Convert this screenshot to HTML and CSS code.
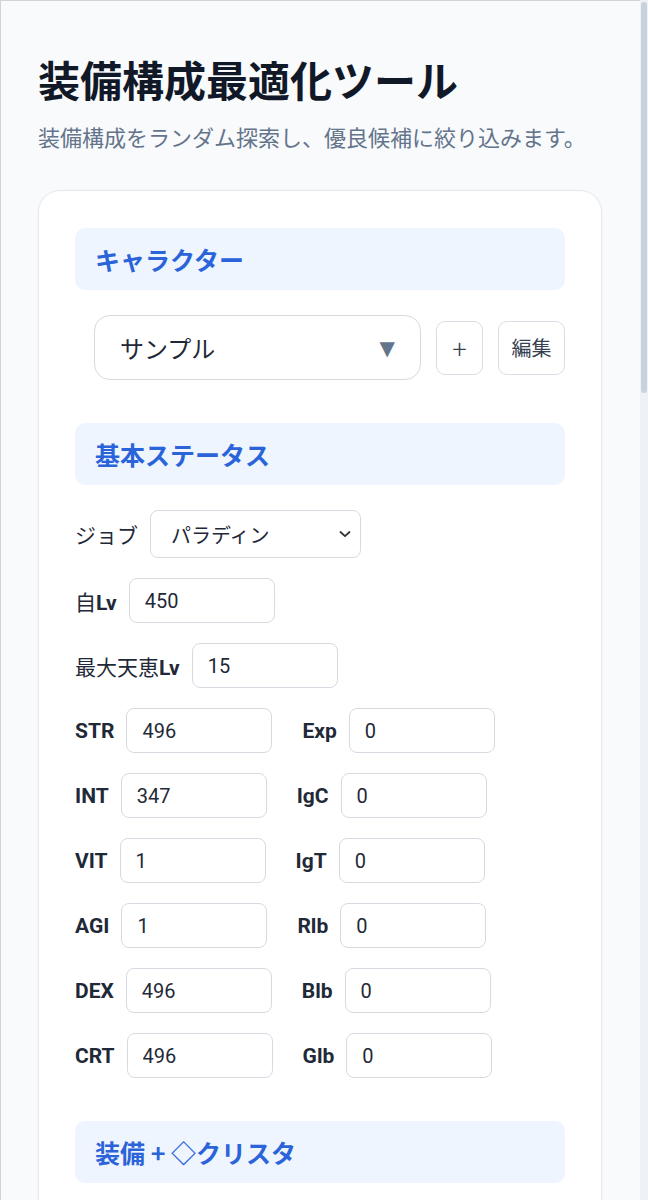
FILE: index.html
```html
<!DOCTYPE html>
<html lang="ja">
<head>
<meta charset="utf-8">
<title>装備構成最適化ツール</title>
<link rel="stylesheet" href="styles.css">
</head>
<body>
<div class="page">
  <h1 class="title">装備構成最適化ツール</h1>
  <p class="subtitle">装備構成をランダム探索し、優良候補に絞り込みます。</p>

  <section class="card">
    <h2 class="sec-head">キャラクター</h2>
    <div class="char-row">
      <div class="char-select">
        <span>サンプル</span>
        <span class="tri">▼</span>
      </div>
      <button class="btn btn-add" type="button">+</button>
      <button class="btn btn-edit" type="button">編集</button>
    </div>

    <h2 class="sec-head sec-gap">基本ステータス</h2>
    <div class="form">
      <div class="row">
        <div class="field">
          <span class="lbl">ジョブ</span>
          <div class="job-select">
            <span>パラディン</span>
            <svg class="chev" width="14" height="10" viewBox="0 0 14 10"><path d="M2.5 3 L7 7.2 L11.5 3" fill="none" stroke="#333" stroke-width="1.8" stroke-linecap="round" stroke-linejoin="round"/></svg>
          </div>
        </div>
      </div>
      <div class="row">
        <div class="field">
          <span class="lbl">自<b class="lat">Lv</b></span>
          <input class="inp" type="text" value="450">
        </div>
      </div>
      <div class="row">
        <div class="field">
          <span class="lbl">最大天恵<b class="lat">Lv</b></span>
          <input class="inp" type="text" value="15">
        </div>
      </div>
      <div class="row">
        <div class="field"><b class="lbl lat">STR</b><input class="inp" type="text" value="496"></div>
        <div class="field"><b class="lbl lat">Exp</b><input class="inp" type="text" value="0"></div>
      </div>
      <div class="row">
        <div class="field"><b class="lbl lat">INT</b><input class="inp" type="text" value="347"></div>
        <div class="field"><b class="lbl lat">IgC</b><input class="inp" type="text" value="0"></div>
      </div>
      <div class="row">
        <div class="field"><b class="lbl lat">VIT</b><input class="inp" type="text" value="1"></div>
        <div class="field"><b class="lbl lat">IgT</b><input class="inp" type="text" value="0"></div>
      </div>
      <div class="row">
        <div class="field"><b class="lbl lat">AGI</b><input class="inp" type="text" value="1"></div>
        <div class="field"><b class="lbl lat">Rlb</b><input class="inp" type="text" value="0"></div>
      </div>
      <div class="row">
        <div class="field"><b class="lbl lat">DEX</b><input class="inp" type="text" value="496"></div>
        <div class="field"><b class="lbl lat">Blb</b><input class="inp" type="text" value="0"></div>
      </div>
      <div class="row">
        <div class="field"><b class="lbl lat">CRT</b><input class="inp" type="text" value="496"></div>
        <div class="field"><b class="lbl lat">Glb</b><input class="inp" type="text" value="0"></div>
      </div>
    </div>

    <h2 class="sec-head sec-gap">装備 + ◇クリスタ</h2>
    <div class="more"></div>
  </section>
</div>
<div class="scrollbar"><div class="thumb"></div></div>
</body>
</html>
```
FILE: styles.css
```css
html, body {
  margin: 0;
  padding: 0;
}
body {
  background: #f8fafc;
  font-family: Roboto, "Noto Sans CJK JP", sans-serif;
  color: #1f2937;
  box-shadow: inset 1px 1px 0 #cfd4da;
}
.page {
  width: 564px;
  padding: 54px 38px 40px 38px;
}
.title {
  margin: 0;
  font-size: 42px;
  line-height: 1.2;
  font-weight: 700;
  color: #111827;
  font-family: "Noto Sans CJK JP", sans-serif;
}
.subtitle {
  margin: 16px 0 0 0;
  font-size: 22px;
  line-height: 1.5;
  color: #64748b;
  font-family: "Noto Sans CJK JP", sans-serif;
}
.card {
  margin-top: 37px;
  background: #ffffff;
  border: 1px solid #e5e9ef;
  border-radius: 22px;
  padding: 37px 36px 36px 36px;
  box-shadow: 0 1px 3px rgba(15, 23, 42, 0.04);
}
.sec-head {
  margin: 0;
  height: 62px;
  display: flex;
  align-items: center;
  padding: 0 20px;
  background: #eef5ff;
  border-radius: 10px;
  color: #2b63d9;
  font-size: 25px;
  font-weight: 700;
  font-family: "Noto Sans CJK JP", sans-serif;
}
.sec-gap {
  margin-top: 43px;
}
.char-row {
  margin-top: 25px;
  padding-left: 19px;
  display: flex;
  align-items: center;
  gap: 15px;
}
.char-select {
  box-sizing: border-box;
  width: 327px;
  height: 65px;
  border: 1px solid #d6dbe2;
  border-radius: 16px;
  padding: 0 25px 0 25px;
  display: flex;
  align-items: center;
  justify-content: space-between;
  font-size: 24px;
  color: #1f2937;
  font-family: "Noto Sans CJK JP", sans-serif;
}
.tri {
  color: #64748b;
  font-size: 20px;
  font-family: "DejaVu Sans", sans-serif;
}
.btn {
  box-sizing: border-box;
  height: 54px;
  background: #ffffff;
  border: 1px solid #d9dee5;
  border-radius: 9px;
  color: #374151;
  padding: 0;
  font-family: "Noto Sans CJK JP", sans-serif;
}
.btn-add {
  width: 47px;
  font-size: 27px;
  font-weight: 300;
}
.btn-edit {
  width: 67px;
  font-size: 20px;
}
.form {
  margin-top: 25px;
  display: flex;
  flex-direction: column;
  gap: 20px;
}
.row {
  display: flex;
  align-items: center;
  gap: 30px;
}
.field {
  display: flex;
  align-items: center;
  gap: 12px;
}
.lbl {
  font-size: 21px;
  font-weight: 400;
  color: #1f2937;
  font-family: "Noto Sans CJK JP", sans-serif;
}
.lat {
  font-family: Roboto, sans-serif;
  font-weight: 700;
  font-size: 21px;
  color: #1f2937;
}
.job-select {
  box-sizing: border-box;
  width: 211px;
  height: 48px;
  border: 1px solid #d6dbe2;
  border-radius: 8px;
  padding: 0 8px 0 20px;
  display: flex;
  align-items: center;
  justify-content: space-between;
  font-size: 20px;
  color: #1f2937;
  font-family: "Noto Sans CJK JP", sans-serif;
}
.chev {
  display: block;
}
.inp {
  box-sizing: border-box;
  width: 146px;
  height: 45px;
  border: 1px solid #d6dbe2;
  border-radius: 8px;
  padding: 0 15px;
  font-size: 20px;
  font-family: Roboto, sans-serif;
  color: #1f2937;
  background: #ffffff;
  outline: none;
}
.more {
  height: 400px;
}
.scrollbar {
  position: fixed;
  top: 0;
  right: 0;
  width: 8px;
  height: 100%;
  background: #eef1f5;
}
.thumb {
  margin: 2px 1px 0 1px;
  height: 391px;
  border-radius: 3px;
  background: #c9d1dc;
}
```
